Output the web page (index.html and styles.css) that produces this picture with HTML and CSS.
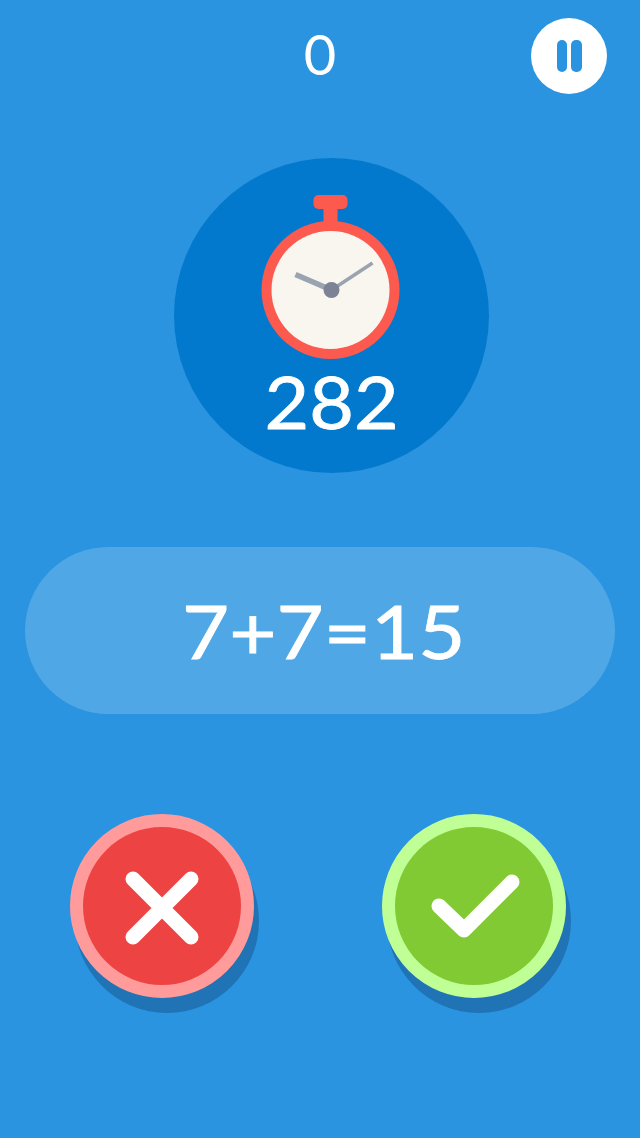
FILE: index.html
```html
<!DOCTYPE html>
<html lang="en">

<head>
    <meta charset="UTF-8">
    <meta name="viewport" content="width=device-width, initial-scale=1.0">
    <title>Math Game</title>
    <link rel="stylesheet" href="styles.css">
</head>

<body>
    <div class="game">
        <div class="topbar">
            <span></span>
            <div class="score">0</div>
            <div class="pause">
                <span class="pausebar"></span>
                <span class="pausebar"></span>
            </div>
        </div>

        <div class="timer">
            <svg class="watch" viewBox="0.5 0 142 166" width="142" height="166">
                <rect x="53" y="0" width="34" height="14" rx="5" fill="#fc5a4f" />
                <rect x="63" y="12" width="14" height="20" fill="#fc5a4f" />
                <circle cx="70" cy="95" r="69" fill="#fc5a4f" />
                <circle cx="70" cy="95" r="59" fill="#f9f6ef" />
                <path d="M71 95 L112 68" stroke="#9aa3b0" stroke-width="3.5" fill="none" />
                <path d="M71 95 L35 79.500" stroke="#9aa3b0" stroke-width="5.500" fill="none" />
                <circle cx="71" cy="95" r="8" fill="#7d8294" />
            </svg>
            <div class="timeleft">282</div>
        </div>

        <div class="question">
            <span class="sum">7+7=15</span>
        </div>

        <div class="answers">
            <div class="answer wrong">
                <svg viewBox="0 0 158 158" width="158" height="158">
                    <path d="M50 52 L108 110 M108 52 L50 110" stroke="#fff" stroke-width="15" stroke-linecap="round" fill="none" />
                </svg>
            </div>
            <div class="answer right">
                <svg viewBox="0 0 158 158" width="158" height="158">
                    <path d="M44 79 L69 103 L117 55" stroke="#fff" stroke-width="15" stroke-linecap="round" stroke-linejoin="round" fill="none" />
                </svg>
            </div>
        </div>
    </div>
</body>

</html>
```

FILE: styles.css
```css
body {
    margin: 0;
    background-color: #2a94e0;
    font-family: "Lato", "Noto Sans", sans-serif;
    color: #fff;
}

.game {
    height: 1138px;
    overflow: hidden;
}

.topbar {
    display: grid;
    grid-template-columns: 1fr auto 1fr;
    align-items: start;
    padding: 18px 33px 0 33px;
}

.score {
    font-size: 56px;
    line-height: 72px;
}

.pause {
    justify-self: end;
    width: 76px;
    height: 76px;
    border-radius: 50%;
    background-color: #fff;
    display: flex;
    align-items: center;
    justify-content: center;
    gap: 4px;
}

.pausebar {
    width: 10.500px;
    height: 32px;
    border-radius: 5px;
    background-color: #2a94e0;
}

.timer {
    width: 315px;
    height: 315px;
    margin: 64px 0 0 174px;
    padding-top: 37px;
    box-sizing: border-box;
    border-radius: 50%;
    background-color: #0379cd;
    display: flex;
    flex-direction: column;
    align-items: center;
}

.watch {
    display: block;
    flex-shrink: 0;
}

.timeleft {
    font-size: 72px;
    line-height: 80px;
    transform: scaleX(1.07);
    -webkit-text-stroke: 0.8px #fff;
}

.question {
    height: 167px;
    margin: 74px 25px 0 25px;
    padding-left: 7px;
    border-radius: 84px;
    background-color: rgba(255, 255, 255, 0.18);
    display: flex;
    align-items: center;
    justify-content: center;
}

.sum {
    font-size: 74px;
    transform: scaleX(1.1);
    -webkit-text-stroke: 0.8px #fff;
}

.answers {
    display: flex;
    gap: 128px;
    margin-top: 100px;
    padding-left: 70px;
}

.answer {
    width: 184px;
    height: 184px;
    box-sizing: border-box;
    border-radius: 50%;
    border: 13px solid;
    box-shadow: 5px 15px 0 #2074b5;
}

.answer svg {
    display: block;
}

.wrong {
    background-color: #ee4343;
    border-color: #ff9b9b;
}

.right {
    background-color: #82ca33;
    border-color: #bfff96;
}
```
